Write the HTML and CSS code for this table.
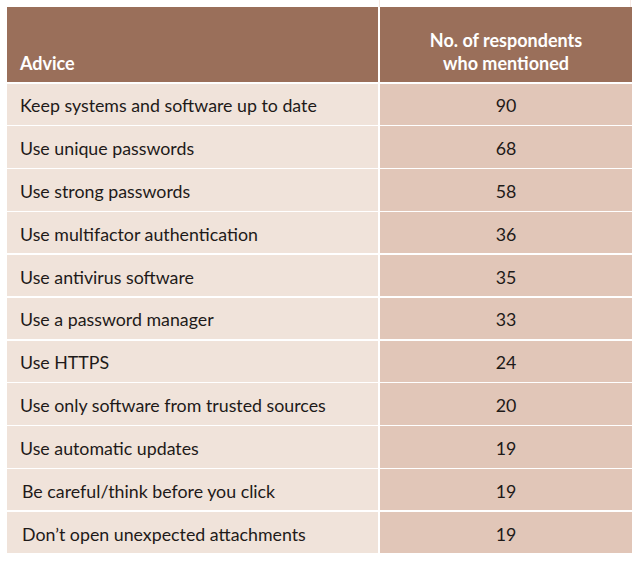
FILE: index.html
```html
<!DOCTYPE html>
<html lang="en">
<head>
<meta charset="utf-8">
<title>Advice</title>
<link rel="stylesheet" href="styles.css">
</head>
<body>
<div class="page">
  <div class="top-strip"><span class="ts-left"></span><span class="ts-right"></span></div>
  <div class="table">
    <div class="th th-left">Advice</div>
    <div class="th th-right">No. of respondents<br>who mentioned</div>

    <div class="td td-left">Keep systems and software up to date</div><div class="td td-right">90</div>
    <div class="td td-left">Use unique passwords</div><div class="td td-right">68</div>
    <div class="td td-left">Use strong passwords</div><div class="td td-right">58</div>
    <div class="td td-left">Use multifactor authentication</div><div class="td td-right">36</div>
    <div class="td td-left">Use antivirus software</div><div class="td td-right">35</div>
    <div class="td td-left">Use a password manager</div><div class="td td-right">33</div>
    <div class="td td-left">Use HTTPS</div><div class="td td-right">24</div>
    <div class="td td-left">Use only software from trusted sources</div><div class="td td-right">20</div>
    <div class="td td-left">Use automatic updates</div><div class="td td-right">19</div>
    <div class="td td-left indent">Be careful/think before you click</div><div class="td td-right">19</div>
    <div class="td td-left indent">Don’t open unexpected attachments</div><div class="td td-right">19</div>
  </div>
</div>
</body>
</html>
```
FILE: styles.css
```css
html, body {
  margin: 0;
  padding: 0;
  background: #ffffff;
}
.page {
  padding: 0 0 0 7px;
  font-family: Lato, "Liberation Sans", sans-serif;
}
.top-strip {
  display: grid;
  grid-template-columns: 371px 252px;
  column-gap: 2px;
  height: 7px;
}
.ts-left {
  border-right: 1px solid #f6e9e4;
  margin-right: -2px;
}
.ts-right {
  border-right: 1px solid #f6e9e4;
  margin-right: 1px;
}
.table {
  display: grid;
  grid-template-columns: 371px 252px;
  grid-template-rows: 75px repeat(11, 41.35px);
  column-gap: 2px;
  row-gap: 1.5px;
}
.table > .th:first-child,
.table > .th:nth-child(2) {
  margin-bottom: 0.5px;
}
.th {
  background: #9a6f5a;
  color: #ffffff;
  font-weight: 700;
  font-size: 18px;
  line-height: 23px;
  display: flex;
  align-items: flex-end;
  padding-bottom: 7px;
  box-sizing: border-box;
}
.th-left {
  padding-left: 13px;
}
.th-right {
  justify-content: center;
  text-align: center;
}
.td {
  display: flex;
  align-items: center;
  font-size: 17.8px;
  color: #1e1a19;
  box-sizing: border-box;
  padding-top: 2px;
}
.td-left {
  background: #f0e3da;
  padding-left: 13px;
}
.td-left.indent {
  padding-left: 15px;
}
.td-right {
  background: #e1c6b8;
  justify-content: center;
}
```
